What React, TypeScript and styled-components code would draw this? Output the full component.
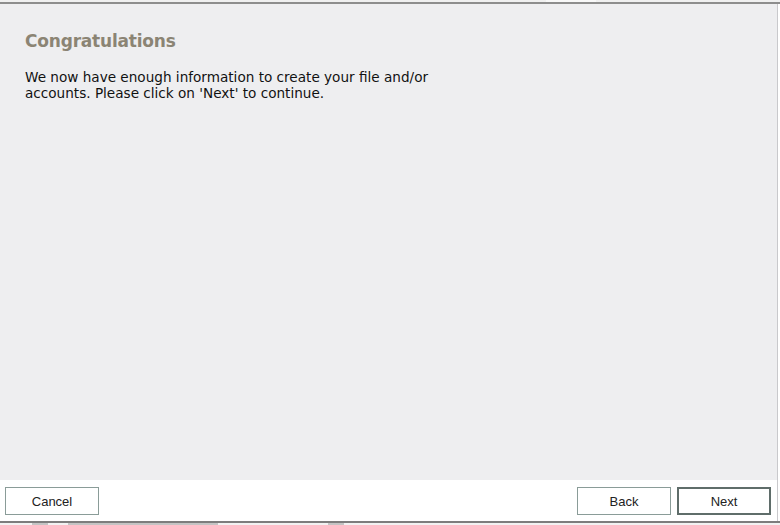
import React from 'react';
import styled, { createGlobalStyle } from 'styled-components';

const GlobalStyle = createGlobalStyle`
    html, body {
        margin: 0;
        padding: 0;
        background: #ffffff;
    }
`;

const Frame = styled.div`
    width: 780px;
    height: 525px;
    display: flex;
    flex-direction: column;
    overflow: hidden;
    background: #ffffff;
`;

const TopStrip = styled.div`
    height: 2px;
    background: #f0f0f0;
    display: flex;
`;

const TopTab = styled.div`
    margin-left: 546px;
    width: 50px;
    background: #f8f8f8;
`;

const Rule = styled.div<{ tone: string }>`
    height: 2px;
    background: ${({ tone }) => tone};
`;

const Body = styled.div`
    flex: 1;
    display: flex;
    flex-direction: column;
    border-right: 1px solid #c9c9cc;
    margin-right: 2px;
`;

const Panel = styled.div`
    flex: 1;
    background: #eeeef0;
    padding: 26px 25px 0 25px;
`;

const Title = styled.h1`
    margin: 0;
    font-family: 'DejaVu Sans', 'Liberation Sans', sans-serif;
    font-weight: bold;
    font-size: 17px;
    line-height: 22px;
    color: #8b8474;
    letter-spacing: -0.2px;
`;

const Message = styled.p`
    margin: 17px 0 0 0;
    width: 440px;
    font-family: 'DejaVu Sans', 'Liberation Sans', sans-serif;
    font-size: 13.6px;
    line-height: 16px;
    color: #111111;
`;

const Footer = styled.div`
    height: 41px;
    background: #ffffff;
    display: flex;
    align-items: center;
    padding: 0 6px 0 5px;
    gap: 6px;
`;

const Spacer = styled.div`
    flex: 1;
`;

const Button = styled.button<{ primary?: boolean }>`
    box-sizing: border-box;
    width: 94px;
    height: 28px;
    margin-top: 1px;
    background: #ffffff;
    border: ${({ primary }) => (primary ? '2px solid #5f6d6a' : '1px solid #8a9c98')};
    font-family: 'Liberation Sans', Arial, sans-serif;
    font-size: 13px;
    color: #222222;
    padding: 0;
    cursor: pointer;
`;

const BottomStrip = styled.div`
    height: 2px;
    background: #f2f2f2;
    display: flex;
`;

const Smudge = styled.div<{ left: number; width: number }>`
    margin-left: ${({ left }) => left}px;
    width: ${({ width }) => width}px;
    background: #c4c4c4;
`;

export default function App() {
    return (
        <Frame>
            <GlobalStyle />
            <TopStrip>
                <TopTab />
            </TopStrip>
            <Rule tone="#8d8d8d" />
            <Body>
                <Panel>
                    <Title>Congratulations</Title>
                    <Message>
                        We now have enough information to create your file and/or accounts. Please
                        click on 'Next' to continue.
                    </Message>
                </Panel>
                <Footer>
                    <Button>Cancel</Button>
                    <Spacer />
                    <Button>Back</Button>
                    <Button primary>Next</Button>
                </Footer>
            </Body>
            <Rule tone="#7d7d7d" />
            <BottomStrip>
                <Smudge left={32} width={16} />
                <Smudge left={20} width={150} />
                <Smudge left={110} width={16} />
            </BottomStrip>
        </Frame>
    );
}
